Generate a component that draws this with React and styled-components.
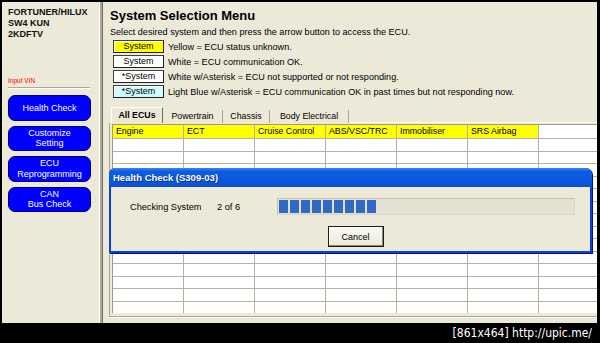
import React from 'react';
import styled, { createGlobalStyle } from 'styled-components';

const Global = createGlobalStyle`
  html, body { margin: 0; padding: 0; background: #000; }
  body { width: 600px; height: 343px; overflow: hidden; font-family: "Liberation Sans", Arial, sans-serif; }
  * { box-sizing: border-box; }
`;

const Screen = styled.div`
  width: 600px;
  height: 343px;
  background: #000;
  padding: 2px 3px 0 2px;
  display: flex;
  flex-direction: column;
`;

const Window = styled.div`
  position: relative;
  display: flex;
  height: 321px;
  background: #ece9d8;
  overflow: hidden;
`;

const Footer = styled.div`
  height: 20px;
  display: flex;
  justify-content: flex-end;
  align-items: center;
  padding-right: 5px;
  color: #fff;
  font-family: "DejaVu Sans Condensed", "DejaVu Sans", sans-serif;
  font-size: 12px;
`;

const LeftPanel = styled.div`
  width: 97px;
  flex: none;
  padding: 5px 0 0 6px;
  display: flex;
  flex-direction: column;
`;

const Brand = styled.div`
  font-weight: bold;
  font-size: 9px;
  line-height: 11px;
  color: #111;
  white-space: nowrap;
`;

const InputVin = styled.div`
  margin-top: 37px;
  font-size: 6.5px;
  line-height: 8px;
  color: #ff0000;
`;

const Rule = styled.div`
  margin-top: 2px;
  width: 82px;
  border-top: 1px solid #aca899;
  border-bottom: 1px solid #fff;
`;

const NavList = styled.div`
  margin-top: 6px;
  display: flex;
  flex-direction: column;
  gap: 5px;
`;

const NavButton = styled.div`
  width: 83px;
  height: 25.5px;
  border-radius: 7px;
  background: #0000ff;
  border: 1px solid #000070;
  color: #fff;
  font-size: 9px;
  line-height: 10.5px;
  display: flex;
  align-items: center;
  justify-content: center;
  text-align: center;
`;

const Divider = styled.div`
  width: 4px;
  flex: none;
  border-left: 1px solid #fff;
  background: #aca899;
  border-right: 1px solid #716f64;
`;

const Main = styled.div`
  flex: 1;
  min-width: 0;
  padding: 6px 0 0 7px;
  display: flex;
  flex-direction: column;
`;

const Title = styled.div`
  font-weight: bold;
  font-size: 13px;
  line-height: 16px;
  color: #000;
`;

const Subtitle = styled.div`
  margin-top: 2px;
  font-size: 9.1px;
  line-height: 12px;
  color: #000;
  white-space: nowrap;
`;

const Legend = styled.div`
  margin-top: 2px;
  margin-left: 3px;
  display: flex;
  flex-direction: column;
  gap: 2px;
`;

const LegendRow = styled.div`
  display: flex;
  align-items: center;
  height: 13px;
  gap: 4px;
  font-size: 9.1px;
  white-space: nowrap;
`;

const Swatch = styled.div`
  width: 51px;
  height: 13px;
  background: ${(p) => p.$bg};
  border: 1px solid #404040;
  border-right-color: #202020;
  border-bottom-color: #202020;
  box-shadow: inset 1px 1px 0 #fff;
  font-size: 9px;
  line-height: 11px;
  text-align: center;
  color: #000;
`;

const TabRow = styled.div`
  margin-top: 9px;
  margin-left: 1px;
  height: 16px;
  display: flex;
  align-items: flex-end;
  position: relative;
  z-index: 1;
`;

const Tab = styled.div`
  width: ${(p) => p.$w}px;
  height: ${(p) => (p.$active ? 16 : 13)}px;
  font-size: 8.8px;
  font-weight: ${(p) => (p.$active ? 'bold' : 'normal')};
  display: flex;
  align-items: center;
  justify-content: center;
  background: #ece9d8;
  color: #000;
  border-top: ${(p) => (p.$active ? '1px solid #fff' : 'none')};
  border-left: ${(p) => (p.$active ? '1px solid #fff' : 'none')};
  border-right: 1px solid ${(p) => (p.$active ? '#716f64' : '#aca899')};
  padding-bottom: 1px;
`;

const TabPanel = styled.div`
  margin-top: -1px;
  margin-left: -1px;
  height: 195px;
  border-top: 1px solid #fff;
  border-left: 1px solid #aca899;
  border-bottom: 1px solid #aca899;
  padding: 1px 0 0 2px;
  box-shadow: 0 1px 0 #fff;
`;

const Grid = styled.div`
  display: grid;
  grid-template-columns: repeat(6, 70px) 1fr;
  grid-template-rows: 13px repeat(14, 11.5px);
  gap: 1px;
  background: #b5b2a4;
  border-top: 1px solid #9d9a8c;
  border-left: 1px solid #9d9a8c;
  height: 189px;
  padding-bottom: 1px;
`;

const Cell = styled.div`
  background: ${(p) => (p.$head ? '#ffff00' : '#fff')};
  font-size: 8.8px;
  line-height: 13px;
  padding-left: 3px;
  white-space: nowrap;
  overflow: hidden;
  color: #000;
`;

const Dialog = styled.div`
  position: absolute;
  left: 107px;
  top: 166px;
  width: 483px;
  height: 85px;
  display: flex;
  flex-direction: column;
  background: #0a3fd0;
  border-radius: 6px 6px 0 0;
  box-shadow: 1px 1px 0 #00138c;
`;

const TitleBar = styled.div`
  height: 19px;
  flex: none;
  border-radius: 6px 6px 0 0;
  background: linear-gradient(#3d85f5 0%, #0b5de0 18%, #0a58dc 70%, #0a4fd0 100%);
  color: #fff;
  font-weight: bold;
  font-size: 9.5px;
  line-height: 19px;
  padding-left: 4px;
  text-shadow: 1px 1px 0 #0a2a80;
`;

const DialogBody = styled.div`
  flex: 1;
  margin: 0 2px 2px 2px;
  background: #ece9d8;
  display: flex;
  flex-direction: column;
  padding: 11px 0 0 19px;
`;

const StatusRow = styled.div`
  display: flex;
  align-items: center;
  height: 17px;
  font-size: 9.2px;
  color: #000;
`;

const StatusLabel = styled.div`
  width: 87px;
`;

const StatusCount = styled.div`
  width: 60px;
`;

const Progress = styled.div`
  width: 298px;
  height: 17px;
  border: 1px solid #d8d5c8;
  border-top-color: #c3c0b2;
  border-left-color: #c3c0b2;
  background: #e4e1d4;
  padding: 1px;
  display: flex;
  gap: 2px;
`;

const Block = styled.div`
  width: 9px;
  height: 100%;
  background: #3169c6;
`;

const ButtonRow = styled.div`
  margin-top: 11px;
  display: flex;
  justify-content: center;
  padding-right: 9px;
`;

const CancelButton = styled.div`
  width: 56px;
  height: 21px;
  border: 1px solid #1c1c1c;
  background: linear-gradient(#fafaf6, #ece9d8);
  box-shadow: inset -1px -1px 0 #8a877a, inset 1px 1px 0 #fff;
  font-size: 9px;
  display: flex;
  align-items: center;
  justify-content: center;
  color: #000;
`;

const headers = ['Engine', 'ECT', 'Cruise Control', 'ABS/VSC/TRC', 'Immobiliser', 'SRS Airbag', ''];
const tabs = [
  { label: 'All ECUs', w: 52, active: true },
  { label: 'Powertrain', w: 60 },
  { label: 'Chassis', w: 47 },
  { label: 'Body Electrical', w: 79 },
];
const legend = [
  { bg: '#ffff00', label: 'System', text: 'Yellow = ECU status unknown.' },
  { bg: '#ffffff', label: 'System', text: 'White = ECU communication OK.' },
  { bg: '#ffffff', label: '*System', text: 'White w/Asterisk = ECU not supported or not responding.' },
  { bg: '#ccfcff', label: '*System', text: 'Light Blue w/Asterisk = ECU communication OK in past times but not responding now.' },
];

export default function App() {
  const rows = Array.from({ length: 14 });
  return (
    <Screen>
      <Global />
      <Window>
        <LeftPanel>
          <Brand>
            FORTUNER/HILUX<br />SW4 KUN<br />2KDFTV
          </Brand>
          <InputVin>Input VIN</InputVin>
          <Rule />
          <NavList>
            <NavButton>Health Check</NavButton>
            <NavButton>Customize<br />Setting</NavButton>
            <NavButton>ECU<br />Reprogramming</NavButton>
            <NavButton>CAN<br />Bus Check</NavButton>
          </NavList>
        </LeftPanel>
        <Divider />
        <Main>
          <Title>System Selection Menu</Title>
          <Subtitle>Select desired system and then press the arrow button to access the ECU.</Subtitle>
          <Legend>
            {legend.map((l, i) => (
              <LegendRow key={i}>
                <Swatch $bg={l.bg}>{l.label}</Swatch>
                <span>{l.text}</span>
              </LegendRow>
            ))}
          </Legend>
          <TabRow>
            {tabs.map((t) => (
              <Tab key={t.label} $w={t.w} $active={t.active}>{t.label}</Tab>
            ))}
          </TabRow>
          <TabPanel>
            <Grid>
              {headers.map((h, i) => (
                <Cell key={'h' + i} $head={h !== ''}>{h}</Cell>
              ))}
              {rows.map((_, r) =>
                headers.map((_, c) => <Cell key={r + '-' + c} />)
              )}
            </Grid>
          </TabPanel>
        </Main>
        <Dialog>
          <TitleBar>Health Check (S309-03)</TitleBar>
          <DialogBody>
            <StatusRow>
              <StatusLabel>Checking System</StatusLabel>
              <StatusCount>2 of 6</StatusCount>
              <Progress>
                {Array.from({ length: 9 }).map((_, i) => (
                  <Block key={i} />
                ))}
              </Progress>
            </StatusRow>
            <ButtonRow>
              <CancelButton>Cancel</CancelButton>
            </ButtonRow>
          </DialogBody>
        </Dialog>
      </Window>
      <Footer>[861x464] http://upic.me/</Footer>
    </Screen>
  );
}
